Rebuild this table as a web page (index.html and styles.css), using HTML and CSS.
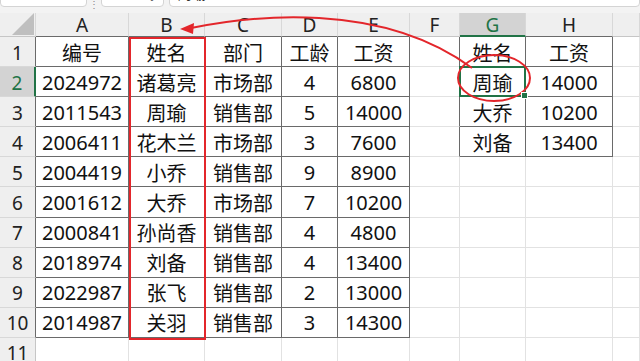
FILE: index.html
```html
<!DOCTYPE html>
<html lang="zh">
<head>
<meta charset="utf-8">
<link rel="stylesheet" href="styles.css">
</head>
<body>
<div class="app">
  <div class="fbar">
    <div class="box namebox">G2</div>
    <div class="grip">⋮</div>
    <div class="box midbox"><span>✕</span><span>✓</span><span class="fx">fx</span></div>
    <div class="box formula">周瑜</div>
  </div>
  <div class="sheet">
    <div class="h corner"><svg width="22" height="22" viewBox="0 0 22 22"><polygon points="22,0 22,22 0,22" fill="#bfbfbf"/></svg></div>
    <div class="h dk">A</div><div class="h dk">B</div><div class="h dk">C</div><div class="h dk">D</div><div class="h dk">E</div><div class="h">F</div><div class="h hsel">G</div><div class="h dk">H</div><div class="h"></div>

    <div class="rh dr">1</div><div class="c t">编号</div><div class="c t">姓名</div><div class="c t">部门</div><div class="c t">工龄</div><div class="c t">工资</div><div class="c dr"></div><div class="c t">姓名</div><div class="c t">工资</div><div class="c"></div>
    <div class="rh rsel">2</div><div class="c t">2024972</div><div class="c t">诸葛亮</div><div class="c t">市场部</div><div class="c t">4</div><div class="c t">6800</div><div class="c dr"></div><div class="c t sel">周瑜</div><div class="c t">14000</div><div class="c"></div>
    <div class="rh dr">3</div><div class="c t">2011543</div><div class="c t">周瑜</div><div class="c t">销售部</div><div class="c t">5</div><div class="c t">14000</div><div class="c dr"></div><div class="c t">大乔</div><div class="c t">10200</div><div class="c"></div>
    <div class="rh dr">4</div><div class="c t">2006411</div><div class="c t">花木兰</div><div class="c t">市场部</div><div class="c t">3</div><div class="c t">7600</div><div class="c dr"></div><div class="c t">刘备</div><div class="c t">13400</div><div class="c"></div>
    <div class="rh dr">5</div><div class="c t">2004419</div><div class="c t">小乔</div><div class="c t">销售部</div><div class="c t">9</div><div class="c t">8900</div><div class="c"></div><div class="c"></div><div class="c"></div><div class="c"></div>
    <div class="rh dr">6</div><div class="c t">2001612</div><div class="c t">大乔</div><div class="c t">市场部</div><div class="c t">7</div><div class="c t">10200</div><div class="c"></div><div class="c"></div><div class="c"></div><div class="c"></div>
    <div class="rh dr">7</div><div class="c t">2000841</div><div class="c t">孙尚香</div><div class="c t">销售部</div><div class="c t">4</div><div class="c t">4800</div><div class="c"></div><div class="c"></div><div class="c"></div><div class="c"></div>
    <div class="rh dr">8</div><div class="c t">2018974</div><div class="c t">刘备</div><div class="c t">销售部</div><div class="c t">4</div><div class="c t">13400</div><div class="c"></div><div class="c"></div><div class="c"></div><div class="c"></div>
    <div class="rh dr">9</div><div class="c t">2022987</div><div class="c t">张飞</div><div class="c t">销售部</div><div class="c t">2</div><div class="c t">13000</div><div class="c"></div><div class="c"></div><div class="c"></div><div class="c"></div>
    <div class="rh dr">10</div><div class="c t">2014987</div><div class="c t">关羽</div><div class="c t">销售部</div><div class="c t">3</div><div class="c t">14300</div><div class="c"></div><div class="c"></div><div class="c"></div><div class="c"></div>
    <div class="rh">11</div><div class="c"></div><div class="c"></div><div class="c"></div><div class="c"></div><div class="c"></div><div class="c"></div><div class="c"></div><div class="c"></div><div class="c"></div>
  </div>
  <svg class="marks" width="640" height="361" viewBox="0 0 640 361">
    <rect x="130" y="38" width="75" height="301" fill="none" stroke="#e3262b" stroke-width="2"/>
    <ellipse cx="494" cy="78" rx="36" ry="23" fill="none" stroke="#e3262b" stroke-width="2"/>
    <path d="M472,68 C380,0 250,16 191,28" fill="none" stroke="#e3262b" stroke-width="2"/>
    <polygon points="180,29 194,23 193,34" fill="#e3262b"/>
  </svg>
</div>
</body>
</html>
```

FILE: styles.css
```css
* { box-sizing: border-box; }
html, body { margin: 0; padding: 0; }
body {
  width: 640px;
  height: 361px;
  overflow: hidden;
  background: #ffffff;
  font-family: "Noto Sans", "Noto Sans CJK SC", sans-serif;
}
.app {
  position: relative;
  width: 640px;
  height: 361px;
  overflow: hidden;
}
.fbar {
  height: 13px;
  background: #f3f3f3;
  display: flex;
  align-items: flex-start;
  overflow: hidden;
}
.box {
  height: 25px;
  margin-top: -18px;
  background: #ffffff;
  border: 1px solid #d4d4d4;
  border-radius: 4px;
  font-size: 14px;
  line-height: 22px;
  color: #333;
  padding-left: 8px;
}
.namebox { width: 87px; }
.grip {
  width: 14px;
  font-size: 10px;
  color: #888;
  text-align: center;
  line-height: 8px;
}
.midbox {
  width: 63px;
  display: flex;
  gap: 12px;
  color: #aaa;
  font-size: 12px;
}
.midbox .fx { font-style: italic; color: #666; }
.formula {
  flex: 1;
  margin-left: 5px;
  padding-left: 8px;
}
.sheet {
  display: grid;
  grid-template-columns: 36px 93px 76px 77px 56px 72px 50px 66px 87px 1fr;
  grid-template-rows: 24px repeat(10, 30.1px) 1fr;
  height: 348px;
}
.h, .rh {
  background: #efefef;
  color: #222;
  font-size: 19px;
  display: flex;
  align-items: center;
  justify-content: center;
  border-right: 1px solid #d8d8d8;
  border-bottom: 1px solid #c6c6c6;
}
.h { padding-top: 1px; }
.rh { border-right: 1px solid #c6c6c6; border-bottom: 1px solid #d8d8d8; padding-top: 2px; }
.corner {
  align-items: flex-end;
  justify-content: flex-end;
  padding: 0 1px 1px 0;
}
.h.dk { border-bottom-color: #6a6a6a; }
.hsel {
  background: #d3d3d3;
  color: #217346;
  border-bottom: 2px solid #217346;
}
.rh.dr { border-right-color: #6a6a6a; }
.rsel {
  background: #d3d3d3;
  color: #217346;
  border-right: 2px solid #217346;
}
.c {
  font-size: 20px;
  color: #111;
  display: flex;
  align-items: center;
  justify-content: center;
  border-right: 1px solid #e2e2e2;
  border-bottom: 1px solid #e2e2e2;
  padding-top: 1px;
}
.c.t {
  border-right-color: #6a6a6a;
  border-bottom-color: #6a6a6a;
}
.c.dr { border-right-color: #6a6a6a; }
.sel { position: relative; }
.sel::after {
  content: "";
  position: absolute;
  left: -1px;
  top: -1px;
  right: -1px;
  bottom: -1px;
  border: 2px solid #217346;
}
.sel::before {
  content: "";
  position: absolute;
  right: -3px;
  bottom: -3px;
  width: 5px;
  height: 5px;
  background: #217346;
  border: 1px solid #fff;
  z-index: 1;
}
.marks {
  position: absolute;
  left: 0;
  top: 0;
  pointer-events: none;
}
```
